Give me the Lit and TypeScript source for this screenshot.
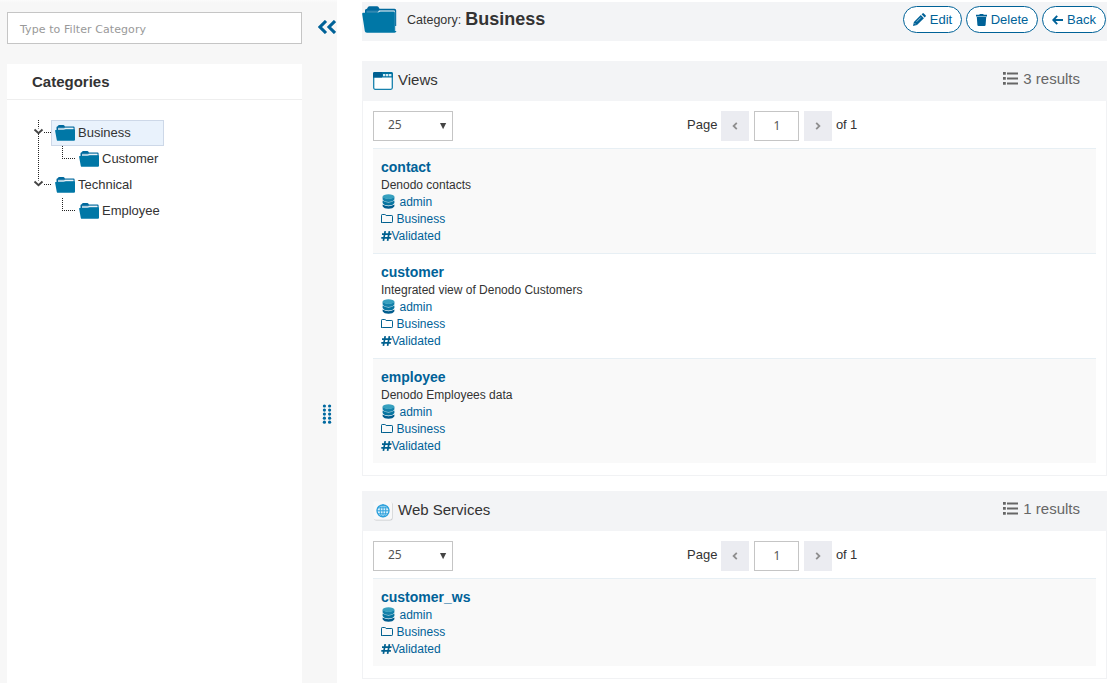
import { LitElement, html, css, svg, nothing } from "lit";
import { customElement, property } from "lit/decorators.js";

interface Entry {
  name: string;
  description?: string;
}

const bigFolder = html`<svg width="35" height="27" viewBox="0 0 35 27">
  <path d="M3 9V4.2Q3 2.7 5 2.7L6 1Q6.5.2 7.5.2H15Q16 .2 16.5 1L17.5 2.7H32.5Q34.2 2.7 34.2 4.5V20H3Z" fill="#00699d"/>
  <path d="M4.5 4.6H32.6V8H4.5Z" fill="#2f87b0"/>
  <path d="M17 4.4H32.2Q32.8 4.4 32.8 5V7H15.5Z" fill="#f4f8fa"/>
  <path d="M1.2 6.8H14.5Q15.8 6.8 16.6 6.2T18.5 5.6H31.4Q32.8 5.6 33 7V25H34.5Q34 26.8 32.5 26.8H5Q3 26.8 2.8 25L.2 8.2Q0 6.8 1.2 6.8Z" fill="#0077a6"/>
  <path d="M32.9 6V25" stroke="#4b9abd" stroke-width=".7"/>
</svg>`;

const smallFolder = html`<svg width="20" height="16" viewBox="0 0 20 16">
  <path d="M1.5 7V2.3Q1.5 1.6 2.3 1.6L3.2.5Q3.5.1 4 .1H8.4Q9 .1 9.3.6L9.9 1.6H18.6Q19.6 1.6 19.6 2.6V9H1.5Z" fill="#00699d"/>
  <path d="M3 2.8H18.4V6H3Z" fill="#a9cde0"/>
  <path d="M9.8 2.8H18.4V4.2H9Z" fill="#eaf2f7"/>
  <path d="M.7 5H8.5Q9.4 5 9.9 4.6T11 4.2H19.2Q20 4.2 20 5.1V14.8Q20 15.8 19 15.8H2.9Q2 15.8 1.8 14.9L.1 5.8Q0 5 .7 5Z" fill="#0077a6"/>
</svg>`;

const windowIcon = html`<svg width="20" height="18" viewBox="0 0 20 18">
  <rect x=".7" y=".7" width="18.6" height="16.6" rx="1.5" fill="#fff" stroke="#1781ad" stroke-width="1.3"/>
  <path d="M0 5.6V1.8Q0 0 1.8 0H18.2Q20 0 20 1.8V5.6Z" fill="#0071a0"/>
  <path d="M0 5.6V1.8Q0 0 1.8 0H9V5.6Z" fill="#005f91"/>
  <path d="M10 2h2.4v2.2h-2.4zM13 2h2.4v2.2h-2.4zM16 2h2.4v2.2h-2.4z" fill="#d4eaf4"/>
</svg>`;

const globeIcon = html`<svg width="20" height="20" viewBox="0 0 20 20">
  <rect x=".8" y="1" width="18.8" height="18.6" rx="2.5" fill="#c8cacc"/>
  <rect x=".2" y=".2" width="18.8" height="18.6" rx="2.5" fill="#f8f8f9"/>
  <circle cx="10" cy="9.8" r="6" fill="#d9f0fb" stroke="#2a9fdb" stroke-width="1.3"/>
  <g fill="none" stroke="#2a9fdb" stroke-width=".95"><ellipse cx="10" cy="9.8" rx="2.8" ry="6"/><path d="M10 4V16M4 9.8H16M5 6.8H15M5 12.8H15"/></g>
</svg>`;

const database = html`<svg width="13" height="15" viewBox="0 0 13 15">
  <path d="M.6 10.4Q6.5 14 12.4 10.4V12.3Q11 14.8 6.5 14.8T.6 12.3Z" fill="#005c8d"/>
  <path d="M.6 6.6Q6.5 10.4 12.4 6.6V9Q11 11.5 6.5 11.5T.6 9Z" fill="#0875a0"/>
  <path d="M.6 2.8Q6.5 6.8 12.4 2.8V5.5Q11 8 6.5 8T.6 5.5Z" fill="#1481aa"/>
  <ellipse cx="6.5" cy="2.6" rx="5.9" ry="2.4" fill="#37a0bf"/>
</svg>`;

const folderOutline = html`<svg width="12" height="10" viewBox="0 0 12 10">
  <path d="M.5 8.7V1.2Q.5.5 1.2.5H3.8Q4.5.5 4.7 1.2L5.1 1.5H10.8Q11.5 1.5 11.5 2.2V7.8Q11.5 8.5 10.8 8.5H1.2Q.5 8.5.5 7.8Z" fill="none" stroke="#00608f"/>
</svg>`;

const hash = html`<svg width="11" height="10" viewBox="0 0 11 10">
  <path d="M4.2.2L2.4 9.8M8.4.2L6.6 9.8M1 3.1H10.6M.3 6.8H9.9" fill="none" stroke="#00608f" stroke-width="1.7"/>
</svg>`;

const listIcon = html`<svg width="15" height="13" viewBox="0 0 15 13">
  <path d="M0 0h2.8v2.8H0zM0 5h2.8v2.8H0zM0 10h2.8v2.8H0zM4 .5h11v1.9H4zM4 5.5h11v1.9H4zM4 10.5h11v1.9H4z" fill="#666"/>
</svg>`;

const pencil = html`<svg width="13" height="13" viewBox="0 0 13 13">
  <path d="M0 13L.9 9L7.8 2.1L10.9 5.2L4 12.1Z M8.6 1.3L9.5.4Q10.1-.2 10.8.4L12.6 2.2Q13.2 2.9 12.6 3.5L11.7 4.4Z" fill="#006298"/>
  <path d="M1.6 10.2L2.8 11.4M3.6 8.7L7.9 4.4" stroke="#fff" stroke-width=".6"/>
</svg>`;

const trash = html`<svg width="11" height="12" viewBox="0 0 11 12">
  <path d="M0 .8H3.2L3.9 0H7.1L7.8.8H11V2.5H0ZM.8 3.1H10.2L9.6 11Q9.5 12 8.5 12H2.5Q1.5 12 1.4 11Z" fill="#006298"/>
</svg>`;

const arrow = html`<svg width="11" height="10" viewBox="0 0 11 10">
  <path d="M11 5H1.5M5.2.8L1.2 5L5.2 9.2" fill="none" stroke="#006298" stroke-width="1.9"/>
</svg>`;

const chevron = (d: string) => html`<svg width="6" height="8" viewBox="0 0 6 8"><path d=${d} fill="none" stroke="#8e8e8e" stroke-width="1.8"/></svg>`;

@customElement("category-tree")
export class CategoryTree extends LitElement {
  static styles = css`
    :host { display: block; padding-top: 20px; font: 13px/26px "Liberation Sans", Arial, sans-serif; color: #333; }
    .row { display: flex; height: 26px; }
    .row svg { display: block; flex: none; }
    .label { display: flex; gap: 3px; padding: 0 4px; height: 26px; box-sizing: border-box; white-space: nowrap; }
    .label svg { margin-top: 5px; }
    .text { line-height: 25px; }
    .selected { width: 113px; padding: 0 3px; background: #e9f2fc; border: 1px solid #cdd8e8; }
    .selected svg { margin-top: 4px; }
    .selected .text { line-height: 23px; }
  `;

  private root(name: string, last: boolean, selected: boolean) {
    return html`<div class="row">
      <svg width="44" height="26" viewBox="0 0 44 26">
        <path d=${last ? "M31.5 0V10" : "M31.5 0V26"} stroke="#222" stroke-dasharray="1 1" shape-rendering="crispEdges"/>
        <path d="M37 12.5H44" stroke="#222" stroke-dasharray="1 1" shape-rendering="crispEdges"/>
        <path d="M27 8.5H36V14H27Z" fill="#fff"/>
        <path d="M27.5 9.5L31.5 13.2L35.5 9.5" fill="none" stroke="#444" stroke-width="1.9"/>
      </svg>
      <div class="label ${selected ? "selected" : ""}">${smallFolder}<span class="text">${name}</span></div>
    </div>`;
  }

  private child(name: string, continues: boolean) {
    return html`<div class="row">
      <svg width="68" height="26" viewBox="0 0 68 26">
        ${continues ? svg`<path d="M31.5 0V26" stroke="#222" stroke-dasharray="1 1" shape-rendering="crispEdges"/>` : nothing}
        <path d="M55.5 0V12.5H68" fill="none" stroke="#222" stroke-dasharray="1 1" shape-rendering="crispEdges"/>
      </svg>
      <div class="label">${smallFolder}<span class="text">${name}</span></div>
    </div>`;
  }

  render() {
    return html`${this.root("Business", false, true)}${this.child("Customer", true)}
      ${this.root("Technical", true, false)}${this.child("Employee", false)}`;
  }
}

@customElement("result-panel")
export class ResultPanel extends LitElement {
  @property() heading = "";
  @property({ attribute: false }) icon: unknown;
  @property({ attribute: false }) entries: Entry[] = [];

  static styles = css`
    :host { display: block; font: 13px "Liberation Sans", Arial, sans-serif; color: #333; }
    svg { display: block; flex: none; }
    .head { display: flex; height: 40px; padding: 0 27px 0 11px; box-sizing: border-box; background: #f3f4f6; font-size: 15px; line-height: 38px; }
    .icon { display: flex; align-items: center; width: 20px; height: 20px; margin: 10px 5px 0 0; }
    .count { display: flex; gap: 5px; margin-left: auto; color: #666; line-height: 36px; }
    .count svg { margin-top: 11px; }
    .body { padding: 10px 10px 12px; border: 1px solid #f1f2f4; border-top: 0; }
    .bar { display: grid; grid-template-columns: 80px 1fr; height: 37px; }
    .select { display: flex; justify-content: space-between; align-items: center; box-sizing: border-box; height: 30px; padding: 0 5px 0 14px; border: 1px solid #c5c5c5; background: #fff; font: 12px/26px "Noto Sans", sans-serif; color: #555; }
    .value { height: 28px; }
    .pager { display: flex; height: 30px; padding-left: 234px; line-height: 28px; white-space: nowrap; }
    .step { display: flex; align-items: center; justify-content: center; width: 28px; height: 30px; background: #ebecf1; }
    .prev { margin-left: 4px; }
    .page { box-sizing: border-box; width: 45px; height: 30px; margin: 0 5px; border: 1px solid #c5c5c5; text-align: center; font: 12px/28px "Noto Sans", sans-serif; color: #555; }
    .of { margin-left: 3.5px; letter-spacing: -0.1px; }
    .item { padding: 9px 8px; border-top: 1px solid #e7eff4; font-size: 12px; line-height: 17px; }
    .item:nth-child(odd) { background: #f9f9f9; }
    .name { font-size: 14px; font-weight: bold; line-height: 18px; color: #006298; }
    .text { height: 17px; line-height: 19px; }
    .meta { display: flex; height: 17px; line-height: 19px; color: #006298; }
    .db { margin: 1px 4.5px 0 1px; }
    .fold { margin: 4px 3.5px 0 0; }
    .tag { margin: 4px -0.5px 0 0; }
  `;

  render() {
    return html`
      <div class="head"><div class="icon">${this.icon}</div><span>${this.heading}</span>
        <div class="count">${listIcon}<span>${this.entries.length} results</span></div></div>
      <div class="body">
        <div class="bar">
          <div class="select"><span class="value">25</span><svg width="8" height="7" viewBox="0 0 8 7"><path d="M1 0H7.2L4.1 6.2Z" fill="#444"/></svg></div>
          <div class="pager"><span>Page</span><span class="step prev">${chevron("M4.8 .8L1.6 4L4.8 7.2")}</span><span class="page">1</span><span class="step">${chevron("M1.2 .8L4.4 4L1.2 7.2")}</span><span class="of">of 1</span></div>
        </div>
        <div>${this.entries.map((e) => html`<div class="item">
          <div class="name">${e.name}</div>
          ${e.description ? html`<div class="text">${e.description}</div>` : nothing}
          <div class="meta"><span class="db">${database}</span>admin</div>
          <div class="meta"><span class="fold">${folderOutline}</span>Business</div>
          <div class="meta"><span class="tag">${hash}</span>Validated</div>
        </div>`)}</div>
      </div>`;
  }
}

@customElement("app-root")
export class AppRoot extends LitElement {
  static styles = css`
    :host { display: flex; height: 683px; overflow: hidden; background: #fff; font: 13px "Liberation Sans", Arial, sans-serif; color: #333; }
    svg { display: block; flex: none; }
    .side { display: flex; flex: none; width: 337px; box-sizing: border-box; padding-left: 7px; background: linear-gradient(#fbfbfb, #f7f7f7 3px); }
    .left { display: flex; flex-direction: column; width: 295px; }
    .filter { box-sizing: border-box; height: 32px; margin: 12px 0 20px; padding: 0 12px; border: 1px solid #c5c5c5; background: #fff; font: 11px/33px "DejaVu Sans", sans-serif; letter-spacing: 0.08px; color: #999; white-space: nowrap; }
    .categories { flex: 1; background: #fff; }
    .title { height: 35px; padding-left: 25px; border-bottom: 1px solid #eee; font-size: 15px; font-weight: bold; line-height: 35px; }
    .rail { display: flex; flex-direction: column; justify-content: space-between; padding: 20px 0 259px 16px; }
    .grip { margin-left: 4px; }
    .main { flex: none; width: 745px; margin-left: 25px; padding-top: 2px; }
    .header { display: flex; height: 39px; margin-bottom: 20px; background: #f3f4f6; white-space: nowrap; }
    .big { margin-top: 4px; }
    .kind { margin: 0 4px 0 10px; line-height: 37px; font-size: 12.5px; }
    .what { font-size: 18px; font-weight: bold; line-height: 34px; }
    .actions { display: flex; gap: 4px; margin: 4px 1px 0 auto; }
    .button { display: flex; justify-content: center; align-items: center; box-sizing: border-box; height: 27px; border: 1px solid #006298; border-radius: 14px; background: #fff; color: #006298; gap: 4px; line-height: 25px; }
    .edit { width: 59px; }
    .delete { width: 72px; }
    .back { width: 64px; }
    .panel { margin-bottom: 15px; }
  `;

  private views: Entry[] = [
    { name: "contact", description: "Denodo contacts" },
    { name: "customer", description: "Integrated view of Denodo Customers" },
    { name: "employee", description: "Denodo Employees data" },
  ];

  private services: Entry[] = [{ name: "customer_ws" }];

  render() {
    const dots = [0, 1, 2, 3, 4].map((i) => svg`<circle cx="2.4" cy=${2 + i * 4.05} r="1.6"/><circle cx="7.6" cy=${2 + i * 4.05} r="1.6"/>`);
    return html`
      <div class="side">
        <div class="left">
          <div class="filter">Type to Filter Category</div>
          <div class="categories"><div class="title">Categories</div><category-tree></category-tree></div>
        </div>
        <div class="rail">
          <svg width="18" height="14" viewBox="0 0 18 14"><path d="M8 1L2 7L8 13M17 1L11 7L17 13" fill="none" stroke="#006298" stroke-width="3.1"/></svg>
          <svg class="grip" width="10" height="20" viewBox="0 0 10 20" fill="#0069a0">${dots}</svg>
        </div>
      </div>
      <div class="main">
        <div class="header">
          <div class="big">${bigFolder}</div><span class="kind">Category:</span><span class="what">Business</span>
          <div class="actions">
            <div class="button edit">${pencil}<span>Edit</span></div>
            <div class="button delete">${trash}<span>Delete</span></div>
            <div class="button back">${arrow}<span>Back</span></div>
          </div>
        </div>
        <result-panel class="panel" heading="Views" .icon=${windowIcon} .entries=${this.views}></result-panel>
        <result-panel class="panel" heading="Web Services" .icon=${globeIcon} .entries=${this.services}></result-panel>
      </div>`;
  }
}
